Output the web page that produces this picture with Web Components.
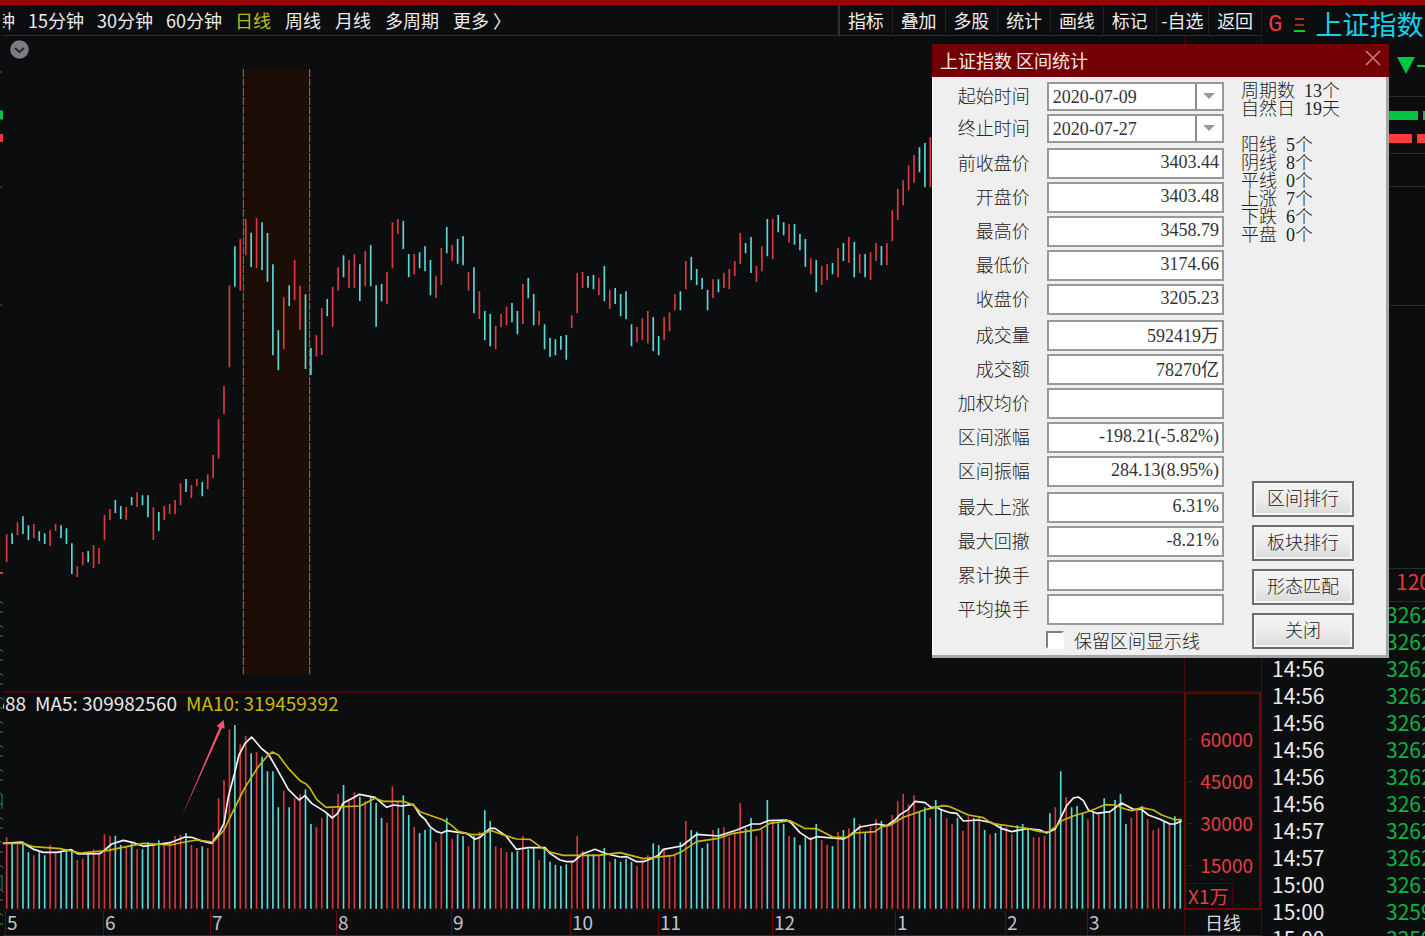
<!DOCTYPE html>
<html lang="zh-CN">
<head>
<meta charset="utf-8">
<title>上证指数 区间统计</title>
<style>
body { margin: 0; background: #0c0d0f; font-family: "Noto Sans CJK SC", "Noto Sans", sans-serif; }
</style>
</head>
<body>
<stock-terminal></stock-terminal>
<script>
const make = (name, html, setup) => customElements.define(name, class extends HTMLElement {
  constructor() {
    super();
    const root = this.attachShadow({ mode: "open" });
    root.innerHTML = html;
    if (setup) setup(root, this);
  }
});

/* ---- market data: one letter per trading day, R = up, C = down ---- */
const DIRECTION = [
  "RCRCCRCCRR", "CCCRRCRRRR", "CCRCRCCRCR", "RRRCRRCRRR", "RRCRRCRCCC",
  "CRCRRCCRRC", "RRCRRCRCCC", "RRRCCRCCCR", "RCRCCRCRCC", "RRRCCRCCRC",
  "CCCCRRRCCR", "CRCCCCRRRC", "CRRRCRCCCC", "RCRRRRCCRR", "CRCCRCCCRC",
  "RRCRCRCRCR", "RCRRRRRRCC", "RCCRRCRRCR", "CRCCRRCCCR", "RRCRCRCCCR",
  "CRCRCCCRRC", "RRRCRCC"
].join("");
const PRICE = [
 [540, "1063,1147 1060,1092 1027,1066 1009,1062 1036,1080 1032,1074 1054,1083 1060,1092 1050,1098 1032,1053 1036,1075 1045,1092 1090,1182 1159,1191 1117,1156 1113,1147 1095,1164 1104,1152 1005,1080 987,1020 960,999 978,1017 981,1020 951,976 937,981 946,976 946,1012 982,1080 996,1053 978,1020 973,1002 960,1002 910,976 897,936 915,954 897,918 906,949 883,927 825,894 717,836 618,702 316,562 199,320 177,332 117,224 158,261 114,264 127,270 159,305 253,526 451,571 352,508 316,378 240,360 317,450 343,567 504,585 465,530 384,525 357,409 321,440 262,332 226,292 240,324 222,324 253,363 213,318 195,319 316,440 312,364 276,373 127,265 118,162 123,207 222,292 222,283 217,265 199,274 240,346 289,354 204,315 141,220 195,243 177,251 168,256 276,332 262,400 334,417"],
 [360, "573,661 582,679 618,688 582,621 560,616 549,607 573,643 492,612 474,535 522,616 573,616 613,688 654,711 658,706 648,689 645,719 586,625 459,580 456,504 468,503 465,508 474,526 438,544 510,567 504,552 522,589 514,598 613,679 621,666 595,660 573,670 591,693 648,706 591,661 577,634 522,571 514,571 423,508 411,481 447,495 474,508 510,571 478,534 478,517 459,504 447,508 423,468 339,432 369,400 351,459 438,486 379,454 297,409 297,418 285,337 307,346 312,368 312,374 342,391 357,441 415,463 420,517 438,495 433,481 429,463 384,472 369,423 351,428 366,472 402,459 402,472 397,480 369,423 378,436 370,436 271,364 207,300 181,256 136,211 105,188 82,157 69,202 51,202"]
];
const VOLUME = "472 490 494 485 517 526 517 526 495 515 515 513 508 540 536 522 508 515 463 467 467 495 500 490 508 508 486 490 481 495 490 468 464 459 495 504 499 504 455 355 301 148 135 193 167 220 216 230 274 274 382 332 382 355 342 328 432 441 414 400 385 342 315 364 337 350 364 350 369 414 428 319 364 346 405 441 459 450 445 486 459 414 477 463 468 499 468 455 391 423 499 504 517 517 513 468 508 504 540 505 545 554 558 553 540 467 513 522 522 526 504 545 536 545 536 545 558 540 526 490 495 508 526 526 486 423 450 455 504 490 450 445 441 472 459 369 445 414 468 450 360 418 430 432 468 472 495 472 472 432 481 495 499 455 450 445 414 432 459 441 418 423 436 405 364 342 373 346 396 382 414 360 386 414 432 414 453 409 414 410 450 463 459 436 441 463 436 432 445 472 472 468 400 382 274 351 382 378 400 418 396 396 355 392 360 342 432 414 387 378 418 451 445 423 430 409 418".split(" ").map(Number);
const MA5 = [
 [0, 0, "10,490 65,486 83,497 101,508 130,517 170,517 213,509 235,522 300,521 312,512 335,492 370,481 400,488 430,499 480,492 510,488 555,471 575,472 600,481 635,490 655,463 672,430 685,350 703,283 717,225 735,190 755,171 784,205 805,222 830,265 865,328 897,360 915,347 935,370 975,395 997,414 1013,400 1030,369 1060,353 1078,343 1125,352 1160,382 1180,375 1205,378 1240,373 1260,405 1275,418 1290,440 1310,455 1325,459 1340,452 1380,458 1400,460 1425,478"],
 [1410, 0, "30,472 60,445 75,445 108,468 139,508 175,503 225,503 240,520 270,540 290,545 310,545 337,522 375,508 405,520 450,531 470,530 500,545 520,545 540,538 567,525 580,508 635,498 680,463 745,468 800,450 845,432 870,432 895,422 950,420 965,430 990,458 1021,478 1040,470 1120,477 1135,470 1170,441 1220,432 1250,437 1275,420 1290,404 1315,388 1335,364 1365,368 1383,382 1400,382"],
 [2820, -90, "0,478 30,488 50,490 70,513 115,510 155,518 183,535 215,545 260,536 300,540 320,549 345,538 360,508 380,467 400,444 415,441 430,452 445,480 470,490 510,485 545,459 580,478 605,478 625,495 660,508 690,522 705,522 725,512"]
];
const MA10 = [
 [0, 0, "10,490 70,490 100,500 180,506 240,519 320,512 380,500 430,490 510,495 555,486 590,480 640,486 672,450 703,386 735,322 775,260 800,230 817,216 835,225 865,265 900,302 917,311 930,325 950,358 978,382 1080,378 1125,355 1150,364 1210,364 1240,375 1260,395 1330,420 1355,436 1375,454 1415,464"],
 [1410, 0, "30,463 65,452 95,463 139,477 180,478 210,500 240,516 280,526 385,526 450,518 520,536 610,526 635,515 680,485 745,475 790,460 870,448 900,430 960,422 1003,445 1040,446 1090,472 1130,472 1155,459 1215,455 1235,440 1260,436 1300,412 1370,388"],
 [2820, -90, "10,467 30,470 85,495 130,503 155,520 230,531 260,535 300,545 325,546 350,528 365,512 400,498 450,483 495,464 525,465 555,477 575,482 605,473 640,480 665,495 705,509 725,509"]
];
const dayX = i => 20 + 16.3 * i;
const stem = (i, a, b) => `M${dayX(i).toFixed(1)} ${a}V${b}`;
const stems = list => ["R", "C"].map(d =>
  `<path class="${d}" d="${list.map((s, i) => DIRECTION[i] === d ? stem(i, s[0], s[1]) : "").join("")}"/>`).join("");
const line = (parts, cls) => `<polyline class="${cls}" points="${parts.map(([dx, dy, pts]) =>
  pts.split(" ").map(p => { const [x, y] = p.split(","); return (+x + dx) + "," + (+y + dy); }).join(" ")).join(" ")}"/>`;
const candles = PRICE.flatMap(([dy, s]) => s.split(" ").map(p => p.split(",").map(v => +v + dy)));

/* ---- toolbar ---- */
make("tool-bar", `<style>
:host { display: flex; justify-content: space-between; height: 30px; border-bottom: 1px solid #2e2f32; color: #ececec; }
nav, .group { display: flex; align-items: center; }
.periods { gap: 13px; }
.group { gap: 14px; }
button { all: unset; font-size: 18px; line-height: 28px; white-space: nowrap; cursor: pointer; }
.cut { width: 12px; overflow: hidden; display: flex; justify-content: flex-end; }
.on { color: #b9bd1c; }
.menu { width: 421px; border-left: 2px solid #2e2f32; }
.menu button { flex: 1; text-align: center; border-left: 1px solid #222326; box-sizing: border-box; }
.menu button:first-child { border-left: 0; }
</style>
<nav class="periods"><button class="cut">钟</button><button>15分钟</button><button>30分钟</button><button>60分钟</button>
<div class="group"><button class="on">日线</button><button>周线</button><button>月线</button><button>多周期</button><button>更多 〉</button></div></nav>
<nav class="menu"><button>指标</button><button>叠加</button><button>多股</button><button>统计</button><button>画线</button><button>标记</button><button>-自选</button><button>返回</button></nav>`);

/* ---- price chart ---- */
make("price-chart", `<style>
:host { display: flex; flex: 1; min-height: 0; position: relative; }
.plot { flex: 1; min-width: 0; height: 100%; display: block; }
path { fill: none; stroke-width: 5; }
.R { stroke: #dc3a3e; } .C { stroke: #5ad8d6; }
.edge { stroke: #8a7d6c; stroke-width: 3; stroke-dasharray: 24 4; }
.axis { width: 76px; border-left: 1px solid #4a0608; }
button { all: unset; position: absolute; left: 7px; top: 4px; width: 19px; height: 19px; cursor: pointer; }
button svg { display: block; }
</style>
<svg class="plot" viewBox="9 108 3543 1965" preserveAspectRatio="none">
<rect x="731" y="207" width="198" height="1818" fill="#1c0d07"/>
<path class="edge" d="M730 207V2025M929 207V2025"/>${stems(candles)}</svg>
<div class="axis"></div>
<button aria-label="收起"><svg width="19" height="19" viewBox="0 0 19 19"><circle cx="9.5" cy="9.5" r="9.3" fill="#7b7c7f"/><path d="M5 8l4.500 4 4.500-4" style="stroke:#26272a;stroke-width:2"/></svg></button>`);

/* ---- volume chart ---- */
make("volume-chart", `<style>
:host { display: flex; height: 219px; border-top: 2px solid #4a0608; box-sizing: border-box; }
.plot { flex: 1; min-width: 0; display: grid; }
.plot > * { grid-area: 1 / 1; }
svg { width: 100%; height: 217px; display: block; }
path { fill: none; stroke-width: 5; }
.R { stroke: #d2383c; } .C { stroke: #5ad8d6; }
polyline { fill: none; stroke-width: 5; stroke-linejoin: round; }
.w { stroke: #f4f4f4; } .y { stroke: #c9b812; }
.legend { display: flex; gap: 9px; height: 20px; align-items: center; font-size: 19px; line-height: 20px; color: #e8e8e8; white-space: nowrap; align-self: start; }
.cut { width: 23px; overflow: hidden; display: flex; justify-content: flex-end; }
.ma10 { color: #c9b812; }
.scale { width: 77px; box-sizing: border-box; border: 2px solid #740408; border-top-width: 1px; display: flex; flex-direction: column; color: #e03f43; font-size: 19px; line-height: 24px; padding-top: 33px; }
.scale div { padding-right: 6px; text-align: right; margin-bottom: 18px; position: relative; }
.scale div:nth-child(4) { margin-bottom: 0; }
.scale div::before { content: ""; position: absolute; left: 2px; top: 12px; width: 5px; height: 1px; background: #740408; }
.scale .unit { margin: auto auto 0 0; padding: 0 4px 0 2px; border: 1px solid #4a0608; border-width: 1px 1px 0 0; }
.scale .unit::before { display: none; }
</style>
<div class="plot"><svg viewBox="9 39 3543 651" preserveAspectRatio="none">
${stems(VOLUME.map(v => [v, 686]))}${line(MA5, "w")}${line(MA10, "y")}
<polygon points="543,415 658,143 650,138 671,120 674,146 666,144" fill="#f5546a"/></svg>
<div class="legend"><span class="cut">588</span><span>MA5: 309982560</span><span class="ma10">MA10: 319459392</span></div></div>
<div class="scale"><div>60000</div><div>45000</div><div>30000</div><div>15000</div><div class="unit">X1万</div></div>`);

/* ---- month axis ---- */
make("month-axis", `<style>
:host { display: flex; height: 26px; box-sizing: border-box; border-bottom: 1px solid #2e2f32; font-size: 19px; line-height: 25px; color: #c4c4c4; }
.months { flex: 1; display: grid; border-top: 1px dotted #4a0608; grid-template-columns: 2px 98fr 107fr 126fr 115fr 119fr 88fr 114fr 123fr 110fr 82fr 97fr; }
.months span { border-left: 1px solid #740408; padding-left: 1px; min-width: 0; background: repeating-linear-gradient(90deg, transparent 0 26px, #4a0608 26px 27px) 0 0 / 100% 4px no-repeat; line-height: 22px; }
.unit { width: 76px; border-left: 1px solid #4a0608; text-align: center; font-size: 18px; color: #dcdcdc; }
</style>
<div class="months"><i></i>${[5,6,7,8,9,10,11,12,1,2,3].map(m => `<span>${m}</span>`).join("")}</div><div class="unit">日线</div>`);

/* ---- quote column on the right ---- */
const ticks = [["","3262"],["","3262"],["14:56","3262"],["14:56","3262"],["14:56","3262"],["14:56","3262"],["14:56","3262"],["14:56","3261"],["14:57","3262"],["14:57","3262"],["15:00","3261"],["15:00","3259"],["15:00","3259"]];
make("quote-panel", `<style>
:host { display: flex; flex-direction: column; width: 164px; height: 100%; overflow: hidden; box-sizing: border-box; border-left: 1px solid #1d1e21; }
.head { height: 92px; flex: none; border-bottom: 1px solid #2a2b2e; box-sizing: border-box; }
.name { display: flex; align-items: center; height: 38px; padding-left: 6px; white-space: nowrap; }
.g { color: #e8393d; font: 24px/36px "Liberation Mono", monospace; padding-top: 2px; }
.name svg { margin: 2px 10px 0 12px; flex: none; }
h1 { margin: 0; font-size: 27px; line-height: 36px; font-weight: 400; color: #10d3e8; }
.chg { display: flex; gap: 2px; align-items: center; padding: 14px 0 0 135px; color: #06c443; }
.chg i { width: 10px; height: 2px; background: #06c443; flex: none; }
.chg svg { flex: none; }
.bars { height: 57px; flex: none; border-bottom: 1px solid #2a2b2e; box-sizing: border-box; display: grid; align-content: start; padding-top: 14px; gap: 14px; }
.bars div { display: flex; gap: 5px; height: 9px; }
.bars i { background: #06c443; width: 156px; flex: none; }
.bars .r i { background: #ff3b3b; width: 150px; }
.row { flex: none; height: 33px; border-bottom: 1px solid #2a2b2e; box-sizing: border-box; }
.tall { height: 119px; }
.gap { flex: 1; border-bottom: 1px solid #2a2b2e; }
.vol { color: #e8393d; padding-left: 134px; font-size: 21px; line-height: 24px; }
table { border-spacing: 0; font-size: 21px; line-height: 24px; color: #ececec; table-layout: fixed; width: 100%; }
td { padding: 0; height: 27px; white-space: nowrap; vertical-align: top; }
td:first-child { width: 114px; padding-left: 10px; box-sizing: border-box; width: 124px; }
td:last-child { color: #0bb443; }
.ticks { height: 334px; overflow: hidden; flex: none; }
</style>
<div class="head"><div class="name"><span class="g">G</span>
<svg width="11" height="16" viewBox="0 0 11 16"><path d="M1 2h9" stroke="#e8393d" stroke-width="1.500"/><path d="M1 8h9" stroke="#c0392b" stroke-width="1.500"/><path d="M0 14h11" stroke="#12d012" stroke-width="2"/></svg><h1>上证指数</h1></div>
<div class="chg"><svg width="18" height="17" viewBox="0 0 18 17"><path d="M0 0h18L9 17z" fill="#06c443"/></svg><i></i></div></div>
<div class="bars"><div><i></i><i></i></div><div class="r"><i></i><i></i></div></div>
<div class="row"></div><div class="row tall"></div><div class="gap"></div><div class="row vol">120</div>
<div class="ticks"><table>${ticks.map(([t, p]) => `<tr><td>${t}</td><td>${p}</td></tr>`).join("")}</table></div>`);

/* ---- sliver of the neighbouring column ---- */
const slivers = Array.from({ length: 14 }, (_, k) => `M0 ${601 + k * 24}l3 3M0 ${612 + k * 24}h3`).join("");
make("edge-column", `<style>
:host { display: block; width: 3px; height: 100%; overflow: hidden; }
svg { display: block; }
</style><svg width="3" height="931" viewBox="0 5 3 931"><path d="M0 115h3" stroke="#06c443" stroke-width="9"/><path d="M0 138h3" stroke="#e8393d" stroke-width="8"/><path d="M0 573h3" stroke="#e8393d" stroke-width="2"/><path d="M0 72h2M0 187h2M0 305h2" stroke="#55565a"/><path d="${slivers}M2 795v14M2 876v14" stroke="#0a9c3c" fill="none"/></svg>`);

/* ---- dialog pieces ---- */
make("field-row", `<style>
:host { display: flex; align-items: center; gap: 17px; height: 31px; }
label { width: 97px; text-align: right; font-size: 18px; line-height: 24px; color: #222; padding-bottom: 4px; }
.box { width: 178px; height: 100%; position: relative; }
input, select { appearance: none; margin: 0; width: 100%; height: 100%; box-sizing: border-box; border: 2px solid #989898; border-radius: 0; background: #fff; color: #333; font: 18px/24px "Liberation Serif", "Noto Sans CJK SC", serif; outline: 0; }
input { text-align: right; padding: 0 3px 3px 0; }
select { padding: 0 30px 0 4px; }
svg { position: absolute; right: 2px; top: 2px; height: calc(100% - 4px); pointer-events: none; }
</style><label for="f"></label><div class="box"></div>`);
customElements.define("stat-field", class extends customElements.get("field-row") {
  connectedCallback() {
    const root = this.shadowRoot, value = this.getAttribute("value") || "";
    root.querySelector("label").textContent = this.getAttribute("label");
    root.querySelector(".box").innerHTML = this.hasAttribute("date")
      ? `<select id="f"><option>${value}</option></select><svg width="27" viewBox="0 0 27 25"><path d="M1 -3V28" stroke="#8c8c8c" stroke-width="2"/><path d="M8 9h12l-6 6z" fill="#989898"/></svg>`
      : `<input id="f" readonly value="${value}">`;
    if (this.hasAttribute("date")) this.style.height = "29px";
  }
});
make("push-button", `<style>
:host { display: block; width: 102px; height: 36px; }
button { width: 100%; height: 100%; padding: 0 0 4px; border: 2px solid #6e6e6e; border-radius: 0; background: linear-gradient(#f4f4f4, #ececec 50%, #dadada); box-shadow: inset 0 0 0 2px #f4f4f4; color: #222; font-family: inherit; font-weight: inherit; font-size: 18px; line-height: 24px; }
</style><button><slot></slot></button>`);

const groups = [
  [["起始时间","2020-07-09",1],["终止时间","2020-07-27",1]],
  [["前收盘价","3403.44"],["开盘价","3403.48"],["最高价","3458.79"],["最低价","3174.66"],["收盘价","3205.23"]],
  [["成交量","592419万"],["成交额","78270亿"],["加权均价",""],["区间涨幅","-198.21(-5.82%)"],["区间振幅","284.13(8.95%)"]],
  [["最大上涨","6.31%"],["最大回撤","-8.21%"],["累计换手",""],["平均换手",""]]
];
const counts = [[["周期数","13个"],["自然日","19天"]],[["阳线","5个"],["阴线","8个"],["平线","0个"],["上涨","7个"],["下跌","6个"],["平盘","0个"]]];
make("range-dialog", `<style>
:host { display: block; width: 457px; box-sizing: border-box; background: #efefef; border: solid #a6a6a6; border-width: 0 3px 3px 0; font-weight: 300; color: #222; }
header { display: flex; justify-content: space-between; height: 33px; background: #730002; margin-right: -3px; padding: 0 8px 0 8px; box-sizing: border-box; }
h2 { margin: 0; font-size: 18px; line-height: 32px; font-weight: 400; color: #f6e9e9; }
.close { all: unset; width: 16px; height: 16px; margin-top: 6px; cursor: pointer; }
.close svg { display: block; }
.content { display: flex; gap: 17px; padding: 5px 0 5px 0; border-left: 1px solid #fff; }
.fields { display: flex; flex-direction: column; gap: 5px; width: 291px; }
.group { display: flex; flex-direction: column; gap: 3px; }
.keep { display: flex; align-items: center; gap: 10px; margin-left: 113px; font-size: 18px; line-height: 20px; white-space: nowrap; }
.keep input { appearance: none; margin: 0; width: 18px; height: 18px; border: 2px solid; border-color: #808080 #fff #fff #808080; background: #fff; }
.side { display: flex; flex-direction: column; justify-content: space-between; }
.counts { display: flex; flex-direction: column; gap: 18px; font: 300 18px/18px "Liberation Serif", "Noto Sans CJK SC", serif; white-space: nowrap; }
.counts dl { margin: 0; }
.counts div { display: flex; gap: 9px; }
.counts dd { margin: 0; }
.buttons { display: flex; flex-direction: column; gap: 8px; margin-left: 11px; padding-bottom: 1px; }
</style>
<header><h2>上证指数 区间统计</h2><button class="close" aria-label="关闭"><svg width="16" height="16" viewBox="0 0 16 16"><path d="M1 1l14 14M15 1L1 15" stroke="#c98080" stroke-width="1.500" fill="none"/></svg></button></header>
<div class="content"><div class="fields">${groups.map(g => `<div class="group">${g.map(([l, v, d]) => `<stat-field label="${l}" value="${v}"${d ? " date" : ""}></stat-field>`).join("")}</div>`).join("")}
<div class="keep"><input type="checkbox" id="keep"><label for="keep">保留区间显示线</label></div></div>
<div class="side"><div class="counts">${counts.map(b => `<dl>${b.map(([k, v]) => `<div><dt>${k}</dt><dd>${v}</dd></div>`).join("")}</dl>`).join("")}</div>
<div class="buttons"><push-button>区间排行</push-button><push-button>板块排行</push-button><push-button>形态匹配</push-button><push-button>关闭</push-button></div></div></div>`);

make("stock-terminal", `<style>
:host { display: flex; flex-direction: column; height: 100vh; overflow: hidden; position: relative; border-top: 5px solid #980405; box-sizing: border-box; }
.body { flex: 1; min-height: 0; display: flex; }
main { flex: 1; min-width: 0; display: flex; flex-direction: column; }
range-dialog { position: absolute; right: 36px; top: 39px; }
</style>
<div class="body"><edge-column></edge-column><main><tool-bar></tool-bar><price-chart></price-chart><volume-chart></volume-chart><month-axis></month-axis></main><quote-panel></quote-panel></div>
<range-dialog></range-dialog>`);
</script>
</body>
</html>
